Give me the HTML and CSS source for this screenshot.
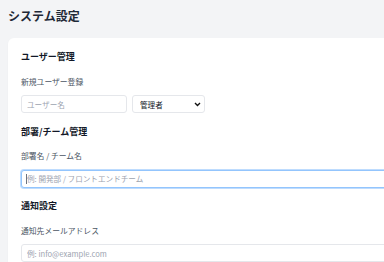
FILE: index.html
```html
<!DOCTYPE html>
<html lang="ja">
<head>
  <meta charset="UTF-8">
  <title>システム設定</title>
  <link rel="stylesheet" href="styles.css">
</head>
<body>
  <h1 class="page-title">システム設定</h1>

  <div class="settings-card">
    <section class="settings-section">
      <h2>ユーザー管理</h2>
      <label class="field-label">新規ユーザー登録</label>
      <div class="user-row">
        <input class="text-input user-name" placeholder="ユーザー名">
        <div class="select-wrap">
          <select class="role-select">
            <option>管理者</option>
            <option>一般ユーザー</option>
          </select>
          <svg class="chevron" width="7" height="5" viewBox="0 0 7 5">
            <path d="M1 1 L3.5 3.5 L6 1" fill="none" stroke="#111" stroke-width="1.4"/>
          </svg>
        </div>
      </div>
    </section>

    <section class="settings-section">
      <h2>部署/チーム管理</h2>
      <label class="field-label">部署名 / チーム名</label>
      <div class="focus-wrap">
        <input class="text-input wide is-focused" placeholder="例: 開発部 / フロントエンドチーム">
        <span class="caret"></span>
      </div>
    </section>

    <section class="settings-section">
      <h2>通知設定</h2>
      <label class="field-label">通知先メールアドレス</label>
      <input class="text-input wide" placeholder="例: info@example.com">
    </section>
  </div>
</body>
</html>
```

FILE: styles.css
```css
:root {
  --bg-color: #f3f4f6;
  --panel-color: #ffffff;
  --text-color: #1f2937;
  --label-color: #4b5563;
  --border-color: #e5e7eb;
  --placeholder: #9ca3af;
  --focus-color: #93c5fd;
}

html {
  overflow: hidden;
}

body {
  font-family: "Noto Sans CJK JP", "Noto Sans", sans-serif;
  background: var(--bg-color);
  margin: 0;
  padding: 8px;
  color: var(--text-color);
}

.page-title {
  font-size: 12px;
  line-height: 16px;
  font-weight: 700;
  margin: 0 0 14px;
  color: #1f2937;
}

.settings-card {
  background: var(--panel-color);
  border-radius: 6px;
  box-shadow: 0 1px 2px rgba(0, 0, 0, 0.04);
  padding: 13px 13px 20px;
  width: 480px;
}

.settings-section {
  margin-bottom: 12.5px;
}

.settings-section h2 {
  font-size: 9px;
  line-height: 12px;
  font-weight: 700;
  margin: 0 0 13.5px;
  color: #111827;
}

.field-label {
  display: block;
  font-size: 7.8px;
  line-height: 10px;
  color: var(--label-color);
  margin-bottom: 8.5px;
}

.user-row {
  display: flex;
  gap: 5px;
  height: 18px;
}

.text-input {
  box-sizing: border-box;
  height: 18px;
  border: 1px solid var(--border-color);
  border-radius: 3px;
  padding: 0 5px;
  font-family: inherit;
  font-size: 7.6px;
  color: var(--text-color);
  background: #fff;
  outline: none;
}

.text-input::placeholder {
  color: var(--placeholder);
}

.user-name {
  width: 106px;
}

.wide {
  width: 100%;
  display: block;
}

.select-wrap {
  position: relative;
  width: 73px;
  height: 18px;
}

.role-select {
  appearance: none;
  display: block;
  box-sizing: border-box;
  width: 100%;
  height: 18px;
  margin: 0;
  border: 1px solid var(--border-color);
  border-radius: 3px;
  padding: 0 7px;
  font-family: inherit;
  font-size: 7.6px;
  color: #111827;
  background: #fff;
}

.chevron {
  position: absolute;
  right: 4px;
  top: 7px;
}

.focus-wrap {
  position: relative;
}

.is-focused {
  border-color: var(--focus-color);
  box-shadow: 0 0 0 1px rgba(147, 197, 253, 0.6);
}

.caret {
  position: absolute;
  left: 5px;
  top: 4px;
  width: 1px;
  height: 10px;
  background: #6b7280;
}
```
